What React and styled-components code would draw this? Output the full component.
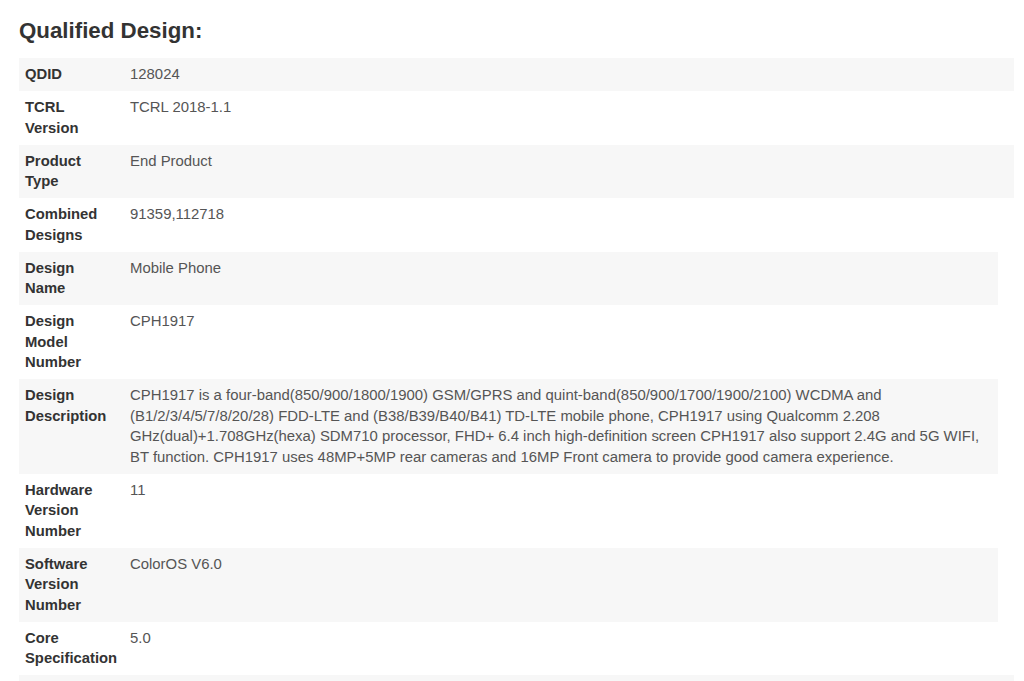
import React from 'react'
import styled, { createGlobalStyle } from 'styled-components'

const GlobalStyle = createGlobalStyle`
  body {
    margin: 0;
    background: #fff;
    font-family: "Liberation Sans", Arial, sans-serif;
  }
`

const Page = styled.div`
  padding: 16px 10px 0 19px;
  height: 681px;
  box-sizing: border-box;
  overflow: hidden;
`

const Title = styled.h2`
  margin: 0 0 12px;
  font-size: 22.3px;
  line-height: 30px;
  font-weight: bold;
  color: #333;
`

const Table = styled.div`
  width: 995px;
  display: flex;
  flex-direction: column;
`

const Row = styled.div`
  display: grid;
  grid-template-columns: 105px 1fr;
  min-height: ${p => (p.$filler ? '20px' : 'auto')};
  margin-right: ${p => (p.$short ? '16px' : '0')};
  background: ${p => (p.$striped ? '#f7f7f7' : '#fff')};
`

const Label = styled.div`
  padding: 6.25px 6px;
  font-size: 14.8px;
  line-height: 20.5px;
  font-weight: bold;
  color: #333;
  white-space: pre-line;
`

const Value = styled.div`
  padding: 6.25px 6px;
  font-size: 14.9px;
  line-height: 20.5px;
  color: #555;
  white-space: pre-line;
`

const rows = [
  { label: 'QDID', value: '128024' },
  { label: 'TCRL\nVersion', value: 'TCRL 2018-1.1' },
  { label: 'Product\nType', value: 'End Product' },
  { label: 'Combined\nDesigns', value: '91359,112718' },
  { label: 'Design\nName', value: 'Mobile Phone', short: true },
  { label: 'Design\nModel\nNumber', value: 'CPH1917' },
  {
    label: 'Design\nDescription',
    value:
      'CPH1917 is a four-band(850/900/1800/1900) GSM/GPRS and quint-band(850/900/1700/1900/2100) WCDMA and\n' +
      '(B1/2/3/4/5/7/8/20/28) FDD-LTE and (B38/B39/B40/B41) TD-LTE mobile phone, CPH1917 using Qualcomm 2.208\n' +
      'GHz(dual)+1.708GHz(hexa) SDM710 processor, FHD+ 6.4 inch high-definition screen CPH1917 also support 2.4G and 5G WIFI,\n' +
      'BT function. CPH1917 uses 48MP+5MP rear cameras and 16MP Front camera to provide good camera experience.',
    short: true,
  },
  { label: 'Hardware\nVersion\nNumber', value: '11' },
  { label: 'Software\nVersion\nNumber', value: 'ColorOS V6.0', short: true },
  { label: 'Core\nSpecification', value: '5.0' },
]

const App = () => {
  return (
    <Page>
      <GlobalStyle />
      <Title>Qualified Design:</Title>
      <Table>
        {rows.map((row, i) => (
          <Row key={row.label} $striped={i % 2 === 0} $short={row.short}>
            <Label>{row.label}</Label>
            <Value>{row.value}</Value>
          </Row>
        ))}
        <Row $striped $filler />
      </Table>
    </Page>
  )
}

export default App
